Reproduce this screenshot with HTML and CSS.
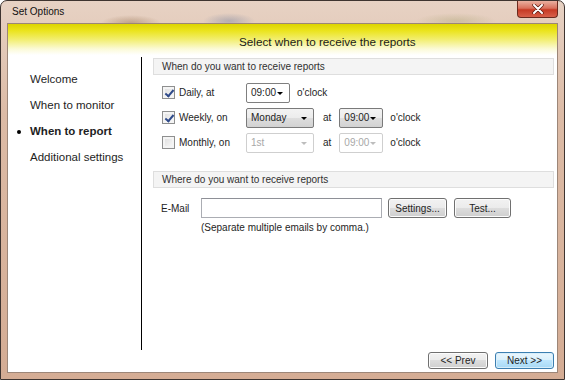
FILE: index.html
```html
<!DOCTYPE html>
<html lang="en">
<head>
  <meta charset="UTF-8">
  <title>Set Options</title>
  <link rel="stylesheet" href="styles.css">
</head>
<body>

<div class="window">
  <div class="titlebar">
    <span class="title">Set Options</span>
    <span class="close">
      <svg width="12" height="10" viewBox="0 0 12 10">
        <path d="M2 1 L10 9 M10 1 L2 9" stroke="#5a1a10" stroke-width="3.4" stroke-linecap="round"/>
        <path d="M2 1 L10 9 M10 1 L2 9" stroke="#fff" stroke-width="2" stroke-linecap="round"/>
      </svg>
    </span>
  </div>

  <div class="client">
    <div class="banner">Select when to receive the reports</div>

    <div class="main">
      <ul class="nav">
        <li>Welcome</li>
        <li>When to monitor</li>
        <li class="current">When to report</li>
        <li>Additional settings</li>
      </ul>

      <div class="content">
        <div class="group-title">When do you want to receive reports</div>
        <div class="rows">
          <div class="row">
            <label class="check"><span class="box checked"></span>Daily, at</label>
            <div class="sel plain w-time">09:00<i class="arrow"></i></div>
            <span class="after">o'clock</span>
          </div>
          <div class="row">
            <label class="check"><span class="box checked"></span>Weekly, on</label>
            <div class="sel raised w-day">Monday<i class="arrow"></i></div>
            <span class="at">at</span>
            <div class="sel raised w-time">09:00<i class="arrow"></i></div>
            <span class="after">o'clock</span>
          </div>
          <div class="row">
            <label class="check"><span class="box"></span>Monthly, on</label>
            <div class="sel off w-day">1st<i class="arrow"></i></div>
            <span class="at">at</span>
            <div class="sel off w-time">09:00<i class="arrow"></i></div>
            <span class="after">o'clock</span>
          </div>
        </div>

        <div class="group-title second">Where do you want to receive reports</div>
        <div class="mail-row">
          <span class="mail-label">E-Mail</span>
          <div class="textbox"></div>
          <button class="btn settings">Settings...</button>
          <button class="btn test">Test...</button>
        </div>
        <div class="hint">(Separate multiple emails by comma.)</div>
      </div>
    </div>

    <div class="footer">
      <button class="btn">&lt;&lt; Prev</button>
      <button class="btn default">Next &gt;&gt;</button>
    </div>
  </div>
</div>

</body>
</html>
```

FILE: styles.css
```css
* {
  box-sizing: border-box;
}

html, body {
  margin: 0;
  width: 565px;
  height: 380px;
  overflow: hidden;
  font-family: "Liberation Sans", Arial, sans-serif;
  color: #1e1e1e;
}

.window {
  height: 380px;
  display: flex;
  flex-direction: column;
  padding: 0 6px 6px 6px;
  border: 1px solid #3e3430;
  border-radius: 7px 7px 0 0;
  background:
    radial-gradient(ellipse 30px 8px at 130px 22px, rgba(120, 80, 40, 0.35), transparent),
    radial-gradient(ellipse 26px 8px at 228px 20px, rgba(90, 110, 150, 0.35), transparent),
    radial-gradient(ellipse 40px 8px at 455px 20px, rgba(150, 150, 90, 0.3), transparent),
    linear-gradient(#e7d2c4, #dcbba6 30%, #d4ac94);
}

.titlebar {
  height: 22px;
  display: flex;
  align-items: flex-start;
}

.title {
  font-size: 10px;
  line-height: 22px;
  padding-left: 5px;
  color: #101010;
}

.close {
  margin-left: auto;
  width: 41px;
  height: 17px;
  display: flex;
  align-items: center;
  justify-content: center;
  border: 1px solid #6b2a1e;
  border-top: none;
  border-radius: 0 0 4px 4px;
  background: linear-gradient(#eab0a0, #d9705c 45%, #c63a24 55%, #d8604a);
}

.client {
  flex: 1;
  display: flex;
  flex-direction: column;
  border: 1px solid #9c8678;
  background: #fff;
}

.banner {
  height: 31px;
  padding: 10px 0 0 231px;
  font-size: 11.7px;
  line-height: 16px;
  color: #1a1a1a;
  background: linear-gradient(#ddd400 0%, #ebe41e 22%, #f2ee70 50%, #fbfad6 80%, #fff 100%);
}

.main {
  flex: 1;
  display: flex;
  margin-top: 2px;
}

.nav {
  width: 134px;
  margin: 0;
  padding: 9px 0 0 0;
  list-style: none;
  border-right: 1px solid #000;
  font-size: 11.5px;
}

.nav li {
  height: 26px;
  line-height: 26px;
  padding-left: 22px;
  position: relative;
}

.nav li.current {
  font-weight: bold;
}

.nav li.current::before {
  content: "";
  position: absolute;
  left: 9px;
  top: 12px;
  width: 4px;
  height: 4px;
  border-radius: 50%;
  background: #000;
}

.content {
  flex: 1;
  padding: 1px 3px 0 11px;
  font-size: 10px;
}

.group-title {
  height: 17px;
  line-height: 15px;
  padding-left: 8px;
  border: 1px solid #dedede;
  background: #f4f4f4;
  color: #303030;
}

.group-title.second {
  margin-top: 16px;
}

.rows {
  margin-top: 5px;
  padding-left: 9px;
}

.row {
  height: 25px;
  display: flex;
  align-items: center;
}

.check {
  width: 84px;
  display: flex;
  align-items: center;
  gap: 4px;
}

.box {
  width: 13px;
  height: 13px;
  border: 1px solid #8e8f8f;
  background: linear-gradient(135deg, #dcdcdc, #fbfbfb);
  box-shadow: inset 0 0 0 2px #f4f4f4;
  position: relative;
}

.box.checked::after {
  content: "";
  position: absolute;
  left: 3.5px;
  top: 1px;
  width: 3px;
  height: 7px;
  border: solid #2f4a8a;
  border-width: 0 2px 2px 0;
  transform: rotate(40deg);
}

.sel {
  height: 20px;
  line-height: 18px;
  padding-left: 4px;
  position: relative;
  border: 1px solid #8a8a8a;
  border-radius: 2px;
}

.sel.plain {
  background: #fff;
  border-color: #7f7f7f;
}

.sel.raised {
  background: linear-gradient(#f3f3f3, #ececec 50%, #dedede 50%, #d2d2d2);
  border-color: #7a7a7a;
}

.sel.off {
  background: #fff;
  border-color: #cfcfcf;
  color: #a8a8a8;
}

.w-time {
  width: 44px;
}

.w-day {
  width: 68px;
}

.arrow {
  position: absolute;
  right: 6px;
  top: 8px;
  width: 0;
  height: 0;
  border-left: 3px solid transparent;
  border-right: 3px solid transparent;
  border-top: 3px solid #000;
}

.sel.off .arrow {
  border-top-color: #bdbdbd;
}

.at {
  margin: 0 8px 0 9px;
}

.after {
  margin-left: 7px;
}

.mail-row {
  margin-top: 10px;
  display: flex;
  align-items: center;
  padding-left: 8px;
}

.mail-label {
  width: 40px;
}

.textbox {
  width: 181px;
  height: 20px;
  border: 1px solid #abadb3;
  border-top-color: #8e9097;
}

.btn {
  height: 20px;
  padding: 0;
  font-family: inherit;
  font-size: 10px;
  color: #1e1e1e;
  border: 1px solid #707070;
  border-radius: 3px;
  background: linear-gradient(#f2f2f2, #ebebeb 50%, #dddddd 50%, #cfcfcf);
  box-shadow: inset 0 0 0 1px #fcfcfc;
}

.btn.settings {
  width: 59px;
  margin-left: 6px;
}

.btn.test {
  width: 57px;
  margin-left: 7px;
}

.hint {
  margin-top: 3px;
  padding-left: 48px;
  line-height: 14px;
}

.footer {
  height: 22px;
  display: flex;
  justify-content: flex-end;
  align-items: flex-end;
  gap: 7px;
  padding: 0 3px 3px 0;
}

.footer .btn {
  width: 60px;
  height: 17px;
}

.footer .btn.default {
  width: 59px;
  border-color: #3c7fb1;
  background: linear-gradient(#eaf6fd, #d9f0fc 50%, #bee6fd 50%, #a7d9f5);
  box-shadow: inset 0 0 0 1px #d8eefa;
}
```
